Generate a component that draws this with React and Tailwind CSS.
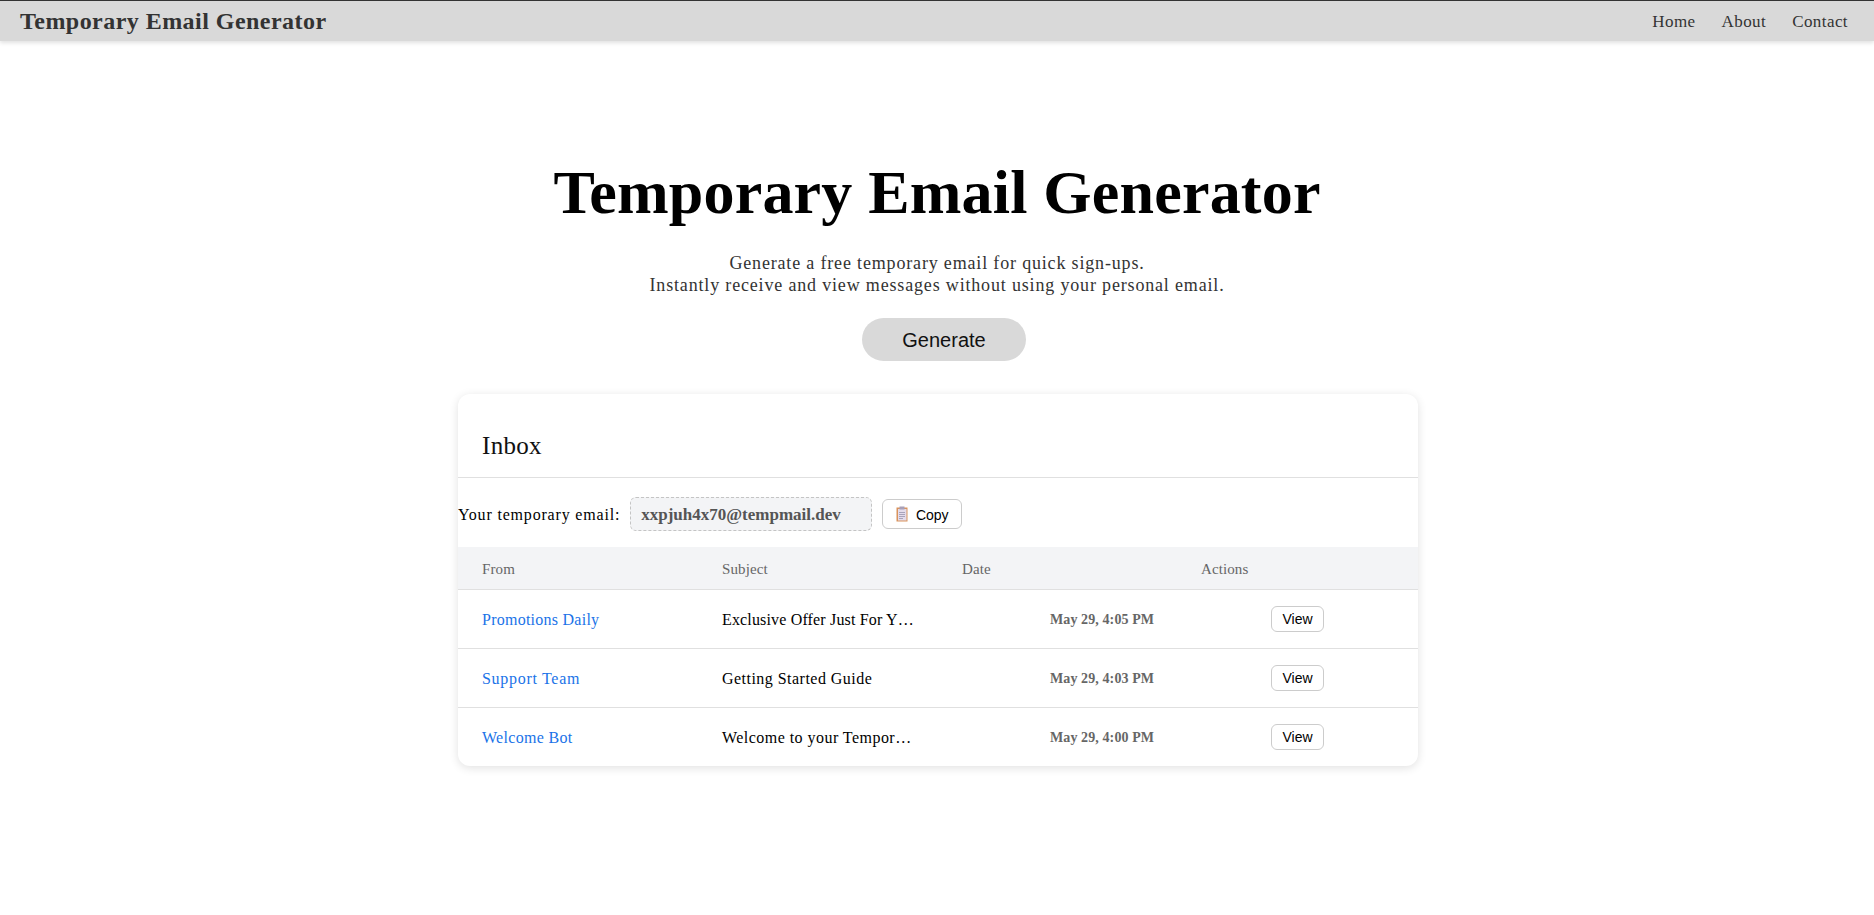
function ClipIcon() {
  return (
    <svg width="12" height="16" viewBox="0 0 12 16" className="shrink-0">
      <rect x="0.5" y="1.5" width="11" height="14" fill="#d9935c" />
      <rect x="2" y="3" width="8.5" height="11.5" fill="#e4dcec" />
      <rect x="3.5" y="0.5" width="5" height="3" fill="#a8a0b8" />
      <path d="M3 6.5h6M3 8.5h6M3 10.5h6M3 12.5h4" stroke="#a9a3bb" strokeWidth="1" />
    </svg>
  );
}
const rows = [
  { from: "Promotions Daily", fromCls: "tracking-[0.25px]", subject: "Exclusive Offer Just For Y…", subjectCls: "tracking-[0.16px]", date: "May 29, 4:05 PM", rowCls: "h-[59px] border-b border-[#e0e0e0]" },
  { from: "Support Team", fromCls: "tracking-[0.7px]", subject: "Getting Started Guide", subjectCls: "tracking-[0.47px]", date: "May 29, 4:03 PM", rowCls: "h-[59px] border-b border-[#e0e0e0]" },
  { from: "Welcome Bot", fromCls: "tracking-[0.3px]", subject: "Welcome to your Tempor…", subjectCls: "tracking-[0.46px]", date: "May 29, 4:00 PM", rowCls: "h-[58px]" },
];
export default function App() {
  return (
    <div className="min-h-[915px] bg-white font-['Liberation_Serif',serif] text-black">
      <header className="h-[41px] bg-[#d9d9d9] border-t border-[#333] shadow-[0_2px_4px_rgba(0,0,0,0.12)] flex items-center justify-between pl-5 pr-[26px]">
        <div className="text-[24px] font-bold text-[#333] tracking-[0.46px]">Temporary Email Generator</div>
        <nav className="flex gap-[26px] pt-[2px] text-[17px] text-[#333] tracking-[0.42px]">
          <span>Home</span><span>About</span><span>Contact</span>
        </nav>
      </header>
      <main className="flex flex-col items-center pt-[111px]">
        <h1 className="text-[62px] leading-[80px] font-bold text-black tracking-[0.2px]">Temporary Email Generator</h1>
        <p className="mt-[20px] text-center text-[18px] leading-[22px] text-[#333] tracking-[0.83px]">
          Generate a free temporary email for quick sign-ups.<br />
          Instantly receive and view messages without using your personal email.
        </p>
        <button className="mt-[22px] ml-[14px] w-[164px] h-[43px] rounded-full bg-[#d9d9d9] text-[20px] text-[#111] font-['Liberation_Sans',sans-serif]">Generate</button>
        <section className="mt-[33px] ml-[2px] w-[960px] rounded-xl bg-white shadow-[0_2px_10px_rgba(0,0,0,0.12)] overflow-hidden">
          <div className="h-[84px] border-b border-[#e0e0e0] pl-6 pt-[38px]">
            <h2 className="text-[25px] leading-[28px] text-[#111] tracking-[0.3px]">Inbox</h2>
          </div>
          <div className="h-[69px] pt-[2px] flex items-center">
            <span className="pt-[2px] text-[16px] tracking-[0.82px]">Your temporary email:</span>
            <span className="ml-[10px] w-[242px] h-[34px] flex items-center pl-[10px] pt-[2px] rounded-md border border-dashed border-[#c4c4c4] bg-[#f3f4f6] font-bold text-[17px] text-[#555]">xxpjuh4x70@tempmail.dev</span>
            <button className="ml-[10px] w-[80px] h-[30px] pt-[1px] flex items-center justify-center gap-[8px] rounded-md border border-[#ccc] bg-white text-[14px] font-['Liberation_Sans',sans-serif]"><ClipIcon /><span className="pt-[2px]">Copy</span></button>
          </div>
          <div className="h-[43px] pt-[2px] bg-[#f3f4f6] border-b border-[#e0e0e0] grid grid-cols-4 items-center text-[15px] text-[#666] tracking-[0.1px]">
            <span className="pl-6">From</span><span className="pl-6">Subject</span><span className="pl-6">Date</span><span className="pl-[23px]">Actions</span>
          </div>
          {rows.map((r) => (
            <div key={r.from} className={`grid grid-cols-4 items-center ${r.rowCls}`}>
              <span className={`pl-6 pt-[2px] text-[16px] text-[#1a73e8] ${r.fromCls}`}>{r.from}</span>
              <span className={`pl-6 pt-[2px] text-[16px] text-black ${r.subjectCls}`}>{r.subject}</span>
              <span className="pl-[112px] pt-[1px] text-[14px] font-bold text-[#666] whitespace-nowrap tracking-[0.1px]">{r.date}</span>
              <span className="pl-[93px] flex">
                <button className="w-[53px] h-[26px] pt-[1px] rounded-md border border-[#ccc] bg-white text-[14px] font-['Liberation_Sans',sans-serif]">View</button>
              </span>
            </div>
          ))}
        </section>
      </main>
    </div>
  );
}
